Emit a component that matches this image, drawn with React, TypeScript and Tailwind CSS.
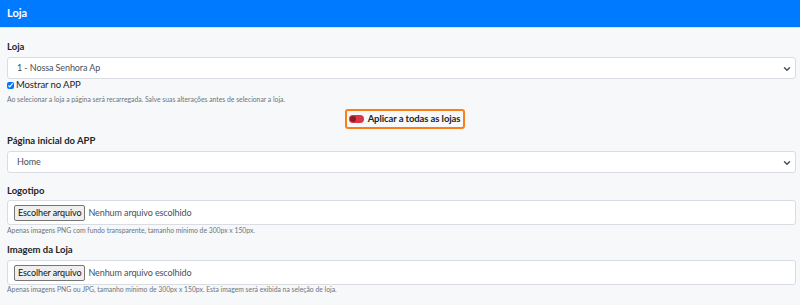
import { ChevronDown } from 'lucide-react';

const font = { fontFamily: 'Lato, "Noto Sans", sans-serif' };

function Select({ value }: { value: string }) {
    return (
        <div className="relative h-[22px] rounded-[3px] border border-[#d9dde3] bg-white flex items-center pl-[9px] text-[9px] tracking-[-0.1px] text-[#495057]">
            {value}
            <ChevronDown size={10} strokeWidth={3.5} className="absolute right-[3px] top-[6px] text-[#495057]" />
        </div>
    );
}

function FileInput() {
    return (
        <div className="h-[25px] rounded-[3px] border border-[#d9dde3] bg-white flex items-center pl-[6px] text-[9px] tracking-[-0.1px] text-[#495057]">
            <span className="h-[16px] px-[3px] flex items-center border border-[#767676] rounded-[2px] bg-[#efefef] text-[#111] mr-[3px]">
                Escolher arquivo
            </span>
            Nenhum arquivo escolhido
        </div>
    );
}

export default function App() {
    return (
        <div className="w-[800px] h-[305px] bg-[#f7f8fa] overflow-hidden" style={font}>
            <div className="h-[28px] bg-[#007bff] border-b border-[#dde3ea] flex items-center px-[7px] text-white text-[11px] font-bold">
                Loja
            </div>
            <div className="px-[7px] pr-[4px]">
                <div className="pt-[12px] text-[9.5px] font-bold text-[#212529] h-[29px]">Loja</div>
                <Select value="1 - Nossa Senhora Ap" />
                <label className="flex items-center gap-[2px] h-[13px] text-[9.5px] tracking-[-0.1px] text-[#212529]">
                    <input type="checkbox" defaultChecked className="w-[7px] h-[7px] m-0 accent-[#0075ff]" />
                    Mostrar no APP
                </label>
                <div className="text-[6.8px] text-[#6c757d] h-[10px] leading-[10px] mt-[2px]">
                    Ao selecionar a loja a página será recarregada. Salve suas alterações antes de selecionar a loja.
                </div>
                <div className="flex justify-center mt-[5px]">
                    <div className="ml-[7px] h-[20px] border-2 border-[#fd7e14] rounded-[3px] flex items-center gap-[4px] pl-[2px] pr-[3px] whitespace-nowrap">
                        <span className="relative w-[15px] h-[8px] rounded-full bg-[#dc3545]">
                            <span className="absolute left-[1px] top-[1px] w-[6px] h-[6px] rounded-full bg-[#8a1c2b]" />
                        </span>
                        <span className="text-[9.5px] tracking-[-0.1px] font-bold text-[#212529]">Aplicar a todas as lojas</span>
                    </div>
                </div>
                <div className="pt-[5px] text-[9.5px] font-bold text-[#212529] h-[22px]">Página inicial do APP</div>
                <Select value="Home" />
                <div className="pt-[11px] text-[9.5px] font-bold text-[#212529] h-[27px]">Logotipo</div>
                <FileInput />
                <div className="text-[6.8px] text-[#6c757d] h-[10px] leading-[10px]">
                    Apenas imagens PNG com fundo transparente, tamanho mínimo de 300px x 150px.
                </div>
                <div className="pt-[8px] text-[9.5px] font-bold text-[#212529] h-[25px]">Imagem da Loja</div>
                <FileInput />
                <div className="text-[6.8px] text-[#6c757d] h-[8px] leading-[8px]">
                    Apenas imagens PNG ou JPG, tamanho mínimo de 300px x 150px. Esta imagem será exibida na seleção de loja.
                </div>
            </div>
        </div>
    );
}
